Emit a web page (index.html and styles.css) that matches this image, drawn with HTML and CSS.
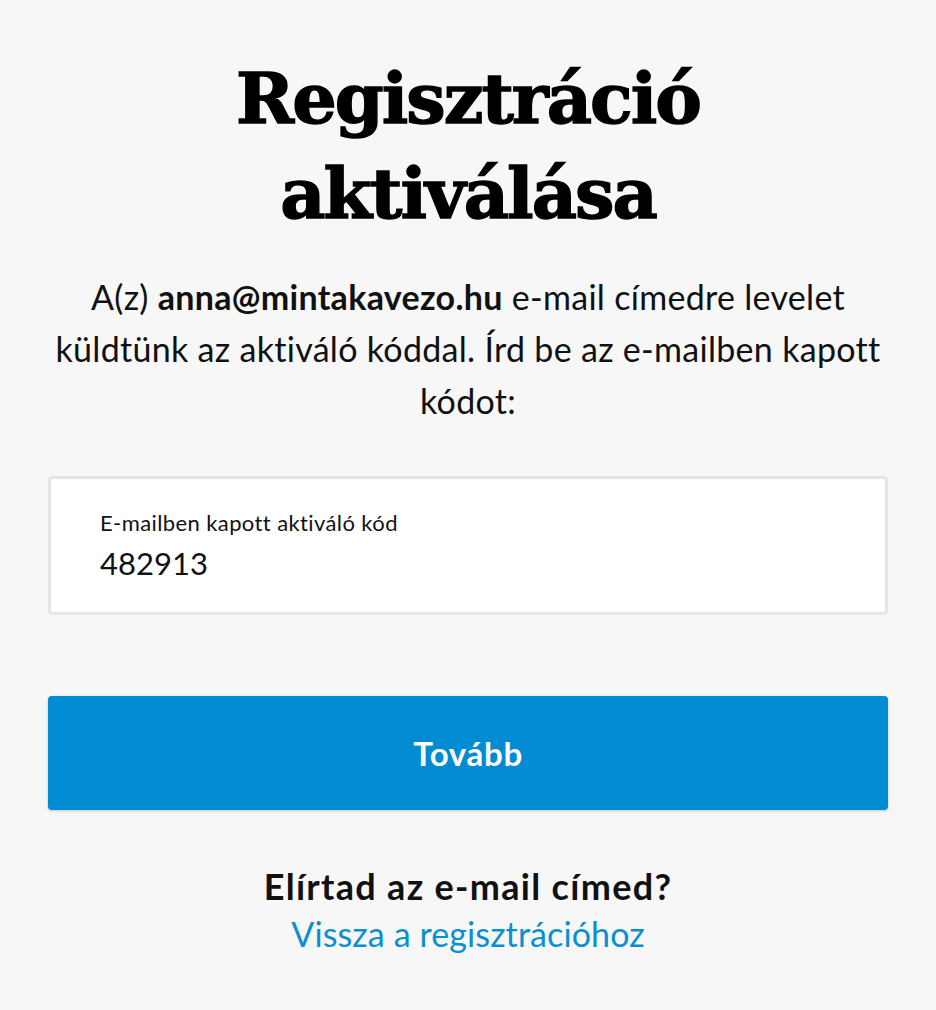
FILE: index.html
```html
<!DOCTYPE html>
<html lang="hu">
<head>
<meta charset="utf-8">
<title>Regisztráció aktiválása</title>
<link rel="stylesheet" href="styles.css">
</head>
<body>
<main class="page">
  <h1 class="title">Regisztráció aktiválása</h1>
  <p class="intro">A(z) <strong>anna@mintakavezo.hu</strong> e-mail címedre levelet küldtünk az aktiváló kóddal. Írd be az e-mailben kapott kódot:</p>
  <label class="field">
    <span class="field-label">E-mailben kapott aktiváló kód</span>
    <input class="field-input" type="text" value="482913">
  </label>
  <button class="btn" type="button">Tovább</button>
  <div class="footer">
    <p class="question">Elírtad az e-mail címed?</p>
    <a class="link" href="#">Vissza a regisztrációhoz</a>
  </div>
</main>
</body>
</html>
```
FILE: styles.css
```css
html, body {
  margin: 0;
  padding: 0;
  background: #f7f7f7;
}
body {
  font-family: Lato, "Noto Sans", sans-serif;
  color: #111;
}
.page {
  display: flex;
  flex-direction: column;
  padding: 0 48px;
  text-align: center;
}
.title {
  margin: 51px 0 0;
  font-family: "DejaVu Serif", serif;
  font-weight: 700;
  font-size: 70px;
  line-height: 95px;
  letter-spacing: -2px;
  color: #000;
  -webkit-text-stroke: 1.4px #000;
  padding: 0 120px;
}
.intro {
  margin: 30px 0 0;
  font-size: 34px;
  line-height: 52px;
  letter-spacing: 0.3px;
  color: #111;
}
.intro strong {
  font-weight: 700;
}
.field {
  margin-top: 49px;
  display: flex;
  flex-direction: column;
  align-items: flex-start;
  background: #fff;
  border: 3px solid #e5e6e9;
  border-radius: 4px;
  height: 139px;
  box-sizing: border-box;
  padding: 31px 49px 0;
  text-align: left;
}
.field-label {
  font-size: 22px;
  line-height: 26px;
  letter-spacing: 0.4px;
  color: #111;
}
.field-input {
  margin-top: 8px;
  border: 0;
  outline: none;
  padding: 0;
  background: transparent;
  font-family: inherit;
  font-size: 31px;
  line-height: 38px;
  color: #111;
  width: 100%;
}
.btn {
  margin-top: 81px;
  height: 114px;
  border: 0;
  border-radius: 4px;
  background: #008bd2;
  box-shadow: 0 1px 3px rgba(0,0,0,0.2);
  color: #fff;
  font-family: inherit;
  font-size: 33px;
  font-weight: 700;
  letter-spacing: 0.7px;
  cursor: pointer;
}
.footer {
  margin-top: 52px;
  display: flex;
  flex-direction: column;
  align-items: center;
}
.question {
  margin: 0;
  font-size: 36px;
  line-height: 48px;
  font-weight: 700;
  letter-spacing: 1.3px;
  color: #111;
}
.link {
  font-size: 34px;
  line-height: 48px;
  letter-spacing: 0.1px;
  color: #0a8fd2;
  text-decoration: none;
}
```
